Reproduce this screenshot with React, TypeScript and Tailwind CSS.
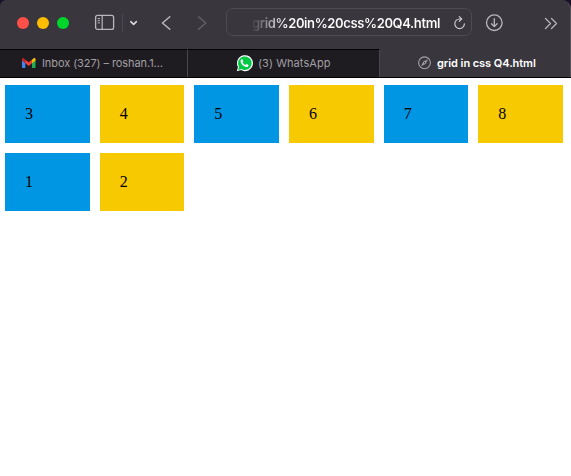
import React from "react";

const cells = [3, 4, 5, 6, 7, 8, 1, 2];

function Toolbar() {
  return (
    <header className="flex h-[49px] shrink-0 items-start rounded-tl-[6px] rounded-tr-[9px] border-r border-[#55525a] bg-[#39363d]">
      <div className="flex gap-2 pt-[17px] pl-[17px]">
        <span className="size-3 rounded-full bg-[#ff4f49]" />
        <span className="size-3 rounded-full bg-[#ffbd00]" />
        <span className="size-3 rounded-full bg-[#00d52b]" />
      </div>
      <svg className="mt-[14px] ml-[25px] h-[17px] w-[21px] shrink-0" viewBox="0 0 21 17" fill="none" stroke="#b9b7bc">
        <rect x="1.6" y="1.4" width="18" height="14" rx="2" strokeWidth="1.3" />
        <path d="M8.2 1.4v14" strokeWidth="1.2" />
        <path d="M3.6 4.5h2.4M3.6 6.7h2.4M3.6 8.9h2.4" strokeWidth="1" />
      </svg>
      <span className="mt-[14px] ml-[7px] h-[18px] w-px bg-[#4b484f]" />
      <svg className="mt-5 ml-[6px] h-[7px] w-[10px] shrink-0" viewBox="0 0 10 7" fill="none" stroke="#dddbe0" strokeWidth="1.6" strokeLinecap="round" strokeLinejoin="round">
        <path d="M1.8 1.7 4.6 4.3 7.4 1.7" />
      </svg>
      <svg className="mt-[15px] ml-[22px] h-4 w-[11px] shrink-0" viewBox="0 0 11 16" fill="none" stroke="#b9b7bc" strokeWidth="1.5" strokeLinecap="round" strokeLinejoin="round">
        <path d="M8.8 1.7 1.5 8l7.3 6.3" />
      </svg>
      <svg className="mt-[15px] ml-[25px] h-4 w-[11px] shrink-0" viewBox="0 0 11 16" fill="none" stroke="#626066" strokeWidth="1.5" strokeLinecap="round" strokeLinejoin="round">
        <path d="M1.5 1.7 8.8 8l-7.3 6.3" />
      </svg>
      <div className="mt-2 ml-[18px] flex h-7 w-[246px] shrink-0 items-center justify-end rounded-[7px] border border-[#4d4a51] pr-[5px]">
        <span className="mt-0.5 bg-linear-to-r from-[#434047] via-[#aaa8ac] via-10% to-white to-18% bg-clip-text text-right font-['Inter',sans-serif] text-[13px] leading-[18px] font-semibold tracking-[-0.38px] whitespace-nowrap text-transparent">
          grid%20in%20css%20Q4.html
        </span>
        <svg className="mt-px ml-[13px] h-4 w-[13px]" viewBox="0 0 13 16" fill="none" stroke="#c9c7cc" strokeWidth="1.2" strokeLinecap="round" strokeLinejoin="round">
          <path d="M6.2 1.6 8.7 4 6.2 6.4M8.5 4H6.6a4.8 4.8 0 1 0 4.8 4.8" />
        </svg>
      </div>
      <svg className="mt-[14px] ml-[13px] h-[18px] w-[18px] shrink-0" viewBox="0 0 18 18" fill="none" stroke="#b9b7bc" strokeWidth="1.3" strokeLinecap="round" strokeLinejoin="round">
        <circle cx="9.3" cy="8.7" r="7.8" />
        <path d="M9.3 4.7v7.8M6.5 9.8l2.8 2.8 2.8-2.8" />
      </svg>
      <svg className="mt-[17px] ml-[41px] h-[13px] w-[14px] shrink-0" viewBox="0 0 14 13" fill="none" stroke="#b9b7bc" strokeWidth="1.3" strokeLinecap="round" strokeLinejoin="round">
        <path d="m1.5 1.5 5 5-5 5M7.5 1.5l5 5-5 5" />
      </svg>
    </header>
  );
}

function Tabs() {
  return (
    <nav className="flex h-[29px] shrink-0 border-b border-black bg-[#1f1c21] font-['Inter',sans-serif] text-[11px] leading-[28px] whitespace-nowrap text-[#a19fa3]">
      <div className="flex w-[188px] border-t border-r border-t-black border-r-[#49464c] pl-[21px]">
        <svg className="mt-[7px] mr-[6px] h-[12px] w-[15px]" viewBox="0 0 15 12">
          <path d="M1 2.2 4.3 4.6V11H2a1 1 0 0 1-1-1z" fill="#4285f4" />
          <path d="M11 4.6 14.5 2.2V10a1 1 0 0 1-1 1H11z" fill="#20ad50" />
          <path d="M11 2.7 12.4 1.4c.9-.8 2.1-.2 2.1.9v1.2L11 6.3z" fill="#fbbc04" />
          <path d="M4.3 2.7 2.9 1.4C2-.1 1 1.2 1 2.3v1.2l3.3 2.8z" fill="#c5221f" />
          <path d="M4.3 2.7 7.7 5.3 11 2.7v3.6L7.7 8.9 4.3 6.3z" fill="#ee4136" />
        </svg>
        <span className="-mt-px tracking-[-0.08px]">Inbox (327) – roshan.1…</span>
      </div>
      <div className="flex w-[192px] border-t border-r border-t-black border-r-[#49464c] pl-[48px]">
        <svg className="mt-[5px] mr-[5px] h-[17px] w-[17px]" viewBox="0 0 17 17">
          <path d="M.8 16.2 2 12.1A8 8 0 1 1 5 15.1z" fill="#fff" />
          <path d="m2.2 14.9.9-3.1a6.8 6.8 0 1 1 2.4 2.3z" fill="#00c944" />
          <path d="M5.3 4.6c.5-.5 1-.5 1.3.1l.6 1.4c.2.5-.6 1-.5 1.3.6 1.2 1.5 2 2.7 2.5.4.1.8-1 1.3-.8l1.5.7c.6.3.3 1.4-.4 1.9-1 .7-2.4.3-3.9-.6-1.4-.9-2.7-2.4-3.2-3.9-.3-1 0-2 .6-2.6z" fill="#fff" />
        </svg>
        <span className="-mt-px tracking-[0.06px]">(3) WhatsApp</span>
      </div>
      <div className="flex flex-1 border-r border-[#55525a] bg-[#39363d] pl-[37px] font-semibold text-white">
        <svg className="mt-[7px] mr-[5px] h-[14px] w-[15px]" viewBox="0 0 15 14" fill="none" stroke="#a5a2a9">
          <circle cx="7.5" cy="6.8" r="5.9" strokeWidth="1.1" />
          <path d="m10.5 3.7-1.9 4.1-4.1 2 1.9-4.1z" fill="#a5a2a9" strokeWidth=".4" />
          <circle cx="7.5" cy="6.8" r=".7" fill="#39363d" stroke="none" />
        </svg>
        <span className="tracking-[-0.06px]">grid in css Q4.html</span>
      </div>
    </nav>
  );
}

export default function App() {
  return (
    <div className="flex h-[476px] w-[571px] flex-col overflow-hidden bg-[#191027]">
      <Toolbar />
      <Tabs />
      <main className="flex-1 bg-white pt-[7px] pr-2 pl-[5px]">
        <div className="grid grid-cols-6 gap-[10px] font-['Liberation_Serif',serif] text-base text-black">
          {cells.map((cell) => (
            <div key={cell} className="h-[58px] bg-[#f7c900] p-5 leading-[18px] odd:bg-[#0096e4]">
              {cell}
            </div>
          ))}
        </div>
      </main>
    </div>
  );
}
